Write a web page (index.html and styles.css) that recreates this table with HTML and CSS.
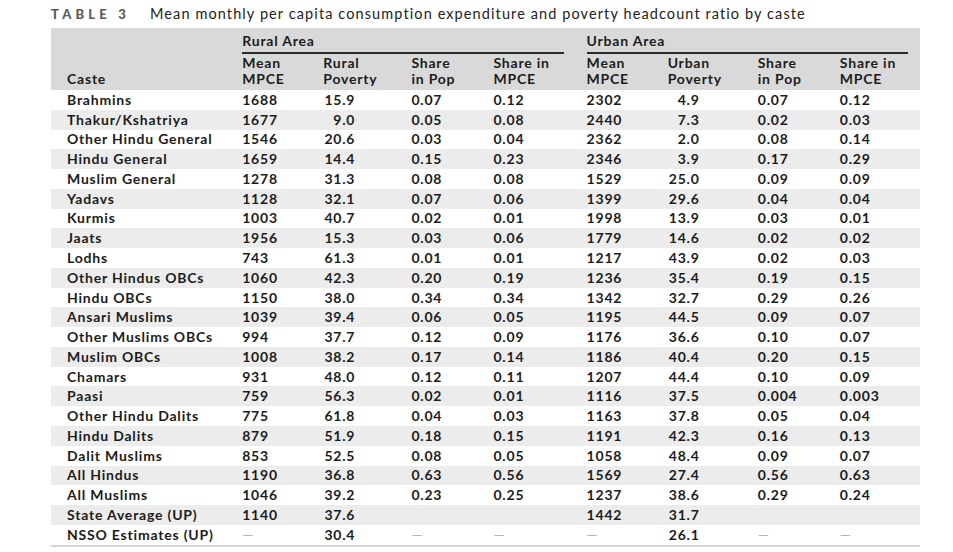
FILE: index.html
```html
<!DOCTYPE html>
<html>
<head>
<meta charset="utf-8">
<link rel="stylesheet" href="styles.css">
</head>
<body>
<div class="page">
  <div class="caption"><span class="label">TABLE 3</span><span class="title">Mean monthly per capita consumption expenditure and poverty headcount ratio by caste</span></div>
  <table class="data">
    <colgroup>
      <col class="c-caste"><col class="c-mean"><col class="c-pov"><col class="c-pop"><col class="c-mpce">
      <col class="c-mean"><col class="c-pov2"><col class="c-pop"><col class="c-mpce2">
    </colgroup>
    <thead>
      <tr class="h1">
        <th rowspan="2" class="caste-h">Caste</th>
        <th colspan="4"><div class="group group-r">Rural Area</div></th>
        <th colspan="4"><div class="group group-u">Urban Area</div></th>
      </tr>
      <tr class="h2">
        <th>Mean<br>MPCE</th><th>Rural<br>Poverty</th><th>Share<br>in Pop</th><th>Share in<br>MPCE</th>
        <th>Mean<br>MPCE</th><th>Urban<br>Poverty</th><th>Share<br>in Pop</th><th>Share in<br>MPCE</th>
      </tr>
    </thead>
    <tbody>
      <tr><td>Brahmins</td><td>1688</td><td><span class="n">15.9</span></td><td>0.07</td><td>0.12</td><td>2302</td><td><span class="n">4.9</span></td><td>0.07</td><td>0.12</td></tr>
      <tr><td>Thakur/Kshatriya</td><td>1677</td><td><span class="n">9.0</span></td><td>0.05</td><td>0.08</td><td>2440</td><td><span class="n">7.3</span></td><td>0.02</td><td>0.03</td></tr>
      <tr><td>Other Hindu General</td><td>1546</td><td><span class="n">20.6</span></td><td>0.03</td><td>0.04</td><td>2362</td><td><span class="n">2.0</span></td><td>0.08</td><td>0.14</td></tr>
      <tr><td>Hindu General</td><td>1659</td><td><span class="n">14.4</span></td><td>0.15</td><td>0.23</td><td>2346</td><td><span class="n">3.9</span></td><td>0.17</td><td>0.29</td></tr>
      <tr><td>Muslim General</td><td>1278</td><td><span class="n">31.3</span></td><td>0.08</td><td>0.08</td><td>1529</td><td><span class="n">25.0</span></td><td>0.09</td><td>0.09</td></tr>
      <tr><td>Yadavs</td><td>1128</td><td><span class="n">32.1</span></td><td>0.07</td><td>0.06</td><td>1399</td><td><span class="n">29.6</span></td><td>0.04</td><td>0.04</td></tr>
      <tr><td>Kurmis</td><td>1003</td><td><span class="n">40.7</span></td><td>0.02</td><td>0.01</td><td>1998</td><td><span class="n">13.9</span></td><td>0.03</td><td>0.01</td></tr>
      <tr><td>Jaats</td><td>1956</td><td><span class="n">15.3</span></td><td>0.03</td><td>0.06</td><td>1779</td><td><span class="n">14.6</span></td><td>0.02</td><td>0.02</td></tr>
      <tr><td>Lodhs</td><td>743</td><td><span class="n">61.3</span></td><td>0.01</td><td>0.01</td><td>1217</td><td><span class="n">43.9</span></td><td>0.02</td><td>0.03</td></tr>
      <tr><td>Other Hindus OBCs</td><td>1060</td><td><span class="n">42.3</span></td><td>0.20</td><td>0.19</td><td>1236</td><td><span class="n">35.4</span></td><td>0.19</td><td>0.15</td></tr>
      <tr><td>Hindu OBCs</td><td>1150</td><td><span class="n">38.0</span></td><td>0.34</td><td>0.34</td><td>1342</td><td><span class="n">32.7</span></td><td>0.29</td><td>0.26</td></tr>
      <tr><td>Ansari Muslims</td><td>1039</td><td><span class="n">39.4</span></td><td>0.06</td><td>0.05</td><td>1195</td><td><span class="n">44.5</span></td><td>0.09</td><td>0.07</td></tr>
      <tr><td>Other Muslims OBCs</td><td>994</td><td><span class="n">37.7</span></td><td>0.12</td><td>0.09</td><td>1176</td><td><span class="n">36.6</span></td><td>0.10</td><td>0.07</td></tr>
      <tr><td>Muslim OBCs</td><td>1008</td><td><span class="n">38.2</span></td><td>0.17</td><td>0.14</td><td>1186</td><td><span class="n">40.4</span></td><td>0.20</td><td>0.15</td></tr>
      <tr><td>Chamars</td><td>931</td><td><span class="n">48.0</span></td><td>0.12</td><td>0.11</td><td>1207</td><td><span class="n">44.4</span></td><td>0.10</td><td>0.09</td></tr>
      <tr><td>Paasi</td><td>759</td><td><span class="n">56.3</span></td><td>0.02</td><td>0.01</td><td>1116</td><td><span class="n">37.5</span></td><td>0.004</td><td>0.003</td></tr>
      <tr><td>Other Hindu Dalits</td><td>775</td><td><span class="n">61.8</span></td><td>0.04</td><td>0.03</td><td>1163</td><td><span class="n">37.8</span></td><td>0.05</td><td>0.04</td></tr>
      <tr><td>Hindu Dalits</td><td>879</td><td><span class="n">51.9</span></td><td>0.18</td><td>0.15</td><td>1191</td><td><span class="n">42.3</span></td><td>0.16</td><td>0.13</td></tr>
      <tr><td>Dalit Muslims</td><td>853</td><td><span class="n">52.5</span></td><td>0.08</td><td>0.05</td><td>1058</td><td><span class="n">48.4</span></td><td>0.09</td><td>0.07</td></tr>
      <tr><td>All Hindus</td><td>1190</td><td><span class="n">36.8</span></td><td>0.63</td><td>0.56</td><td>1569</td><td><span class="n">27.4</span></td><td>0.56</td><td>0.63</td></tr>
      <tr><td>All Muslims</td><td>1046</td><td><span class="n">39.2</span></td><td>0.23</td><td>0.25</td><td>1237</td><td><span class="n">38.6</span></td><td>0.29</td><td>0.24</td></tr>
      <tr><td>State Average (UP)</td><td>1140</td><td><span class="n">37.6</span></td><td></td><td></td><td>1442</td><td><span class="n">31.7</span></td><td></td><td></td></tr>
      <tr><td>NSSO Estimates (UP)</td><td class="dash">—</td><td><span class="n">30.4</span></td><td class="dash">—</td><td class="dash">—</td><td class="dash">—</td><td><span class="n">26.1</span></td><td class="dash">—</td><td class="dash">—</td></tr>
    </tbody>
  </table>
</div>
</body>
</html>
```

FILE: styles.css
```css
html, body {
  margin: 0;
  padding: 0;
  background: #ffffff;
}

.page {
  padding: 5px 0 0 51px;
  font-family: Lato, "Open Sans", sans-serif;
  color: #1c1c1c;
}

.caption {
  display: flex;
  align-items: baseline;
  height: 23px;
  font-size: 14.5px;
  line-height: 18px;
}

.label {
  font-weight: 900;
  letter-spacing: 4.2px;
  color: #5a5a5a;
  font-size: 13px;
  width: 99px;
}

.title {
  color: #222;
  letter-spacing: 1.1px;
}

.data {
  border-collapse: collapse;
  table-layout: fixed;
  width: 869px;
  font-size: 14px;
  letter-spacing: 0.8px;
  font-weight: 700;
  border-bottom: 2px solid #d4d4d4;
}

.c-caste { width: 189px; }
.c-mean { width: 81px; }
.c-pov { width: 88px; }
.c-pop { width: 82px; }
.c-mpce { width: 93px; }
.c-pov2 { width: 90px; }
.c-mpce2 { width: 82px; }

thead th {
  background: #d9d9d9;
  text-align: left;
  font-weight: 700;
  padding: 0 0 0 2px;
}

.h1 th {
  height: 26px;
  vertical-align: bottom;
}

.h1 th.caste-h {
  padding-left: 16px;
  padding-bottom: 3px;
  line-height: 16px;
}

.group {
  padding-top: 2px;
  line-height: 22px;
  border-bottom: 2px solid #2a2a2a;
}

.group-r { margin-right: 21px; }
.group-u { margin-right: 12px; }

.h2 th {
  height: 33px;
  line-height: 16px;
  vertical-align: bottom;
  padding-bottom: 3px;
}

tbody td {
  height: 19.78px;
  padding: 0 0 0 2px;
  line-height: 16px;
  vertical-align: middle;
  white-space: nowrap;
}

tbody td:first-child {
  padding-left: 16px;
}

tbody tr:nth-child(even) td {
  background: #ececec;
}

.n {
  display: inline-block;
  width: 32px;
  text-align: right;
}

.dash {
  color: #b5b5b5;
  font-weight: 400;
}
```
